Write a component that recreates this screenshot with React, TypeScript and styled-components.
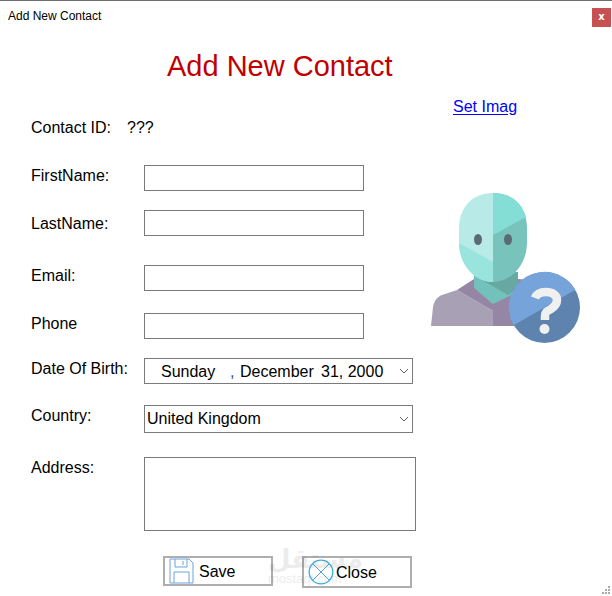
import React from "react";
import styled, { createGlobalStyle } from "styled-components";

const GlobalStyle = createGlobalStyle`
  html, body {
    margin: 0;
    padding: 0;
    background: #fff;
  }
  * {
    box-sizing: border-box;
  }
`;

const Chevron = () => (
  <ChevronIcon width="10" height="6" viewBox="0 0 10 6">
    <path d="M1 1l4 4 4-4" fill="none" stroke="#606060" strokeWidth="1" />
  </ChevronIcon>
);

const ContactPicture = () => (
  <PictureSvg width="170" height="170" viewBox="0 0 170 170">
    <path d="M11 146l2-19c1-6 4-10 9-12l15-5 36 21v15z" fill="#a8a0b4" />
    <path d="M54 99L37 110l36 21v15h37V100l-12-1z" fill="#9686a5" />
    <path d="M54 92v16l19 16 25-12V92z" fill="#72c1ba" />
    <path d="M62 100l26 15 10-7V92z" fill="#68a8a3" />
    <path d="M73 13C50 13 39 30 39 48v14c0 23 16 40 34 40z" fill="#b8ebe7" />
    <path d="M39 63l34 19v20C55 102 39 85 39 63z" fill="#99e5dd" />
    <path d="M73 13c23 0 34 17 34 35v14c0 23-16 40-34 40z" fill="#78c4bd" />
    <path d="M73 13c18 0 29 10 33 24L73 55z" fill="#85ded6" />
    <ellipse cx="58" cy="59.500" rx="4" ry="5.500" fill="#5c6b73" />
    <ellipse cx="88" cy="59.500" rx="4" ry="5.500" fill="#5c6b73" />
    <circle cx="124.500" cy="127.500" r="35.500" fill="#5e83ae" />
    <path d="M93.600 145.300A35.500 35.500 0 0 1 155.400 109.700z" fill="#76a4da" />
    <path
      d="M115 118c2-5 7-6 11-6 6 0 11 3 11 8 0 4-3 7-6 9-4 2-6 3-6 7v4"
      fill="none"
      stroke="#f0f0f0"
      strokeWidth="8.500"
    />
    <circle cx="124.500" cy="149" r="5" fill="#f0f0f0" />
  </PictureSvg>
);

const SaveIcon = () => (
  <svg width="25" height="26" viewBox="0 0 25 26">
    <path
      d="M1 1h19l4 4v20H1zM6 1v8h12V1M14 3v4M5 25V14h15v11"
      fill="none"
      stroke="#6ca3dc"
      strokeWidth="1"
    />
  </svg>
);

const CloseIcon = () => (
  <svg width="26" height="26" viewBox="0 0 26 26">
    <circle cx="13" cy="13" r="11.800" fill="none" stroke="#35aee8" strokeWidth="1.300" />
    <path d="M5 5l16 16M21 5L5 21" stroke="#5a9fd0" strokeWidth="1" />
  </svg>
);

export default function App() {
  return (
    <Window>
      <GlobalStyle />
      <TitleBar>
        <TitleText>Add New Contact</TitleText>
        <CloseBox>x</CloseBox>
      </TitleBar>

      <Heading>Add New Contact</Heading>

      <Body>
        <FormColumn>
          <IdRow>
            <IdLabel>Contact ID:</IdLabel>
            <span>???</span>
          </IdRow>

          <Row $top={28}>
            <Label>FirstName:</Label>
            <TextBox />
          </Row>
          <Row $top={19}>
            <Label $offset={5}>LastName:</Label>
            <TextBox />
          </Row>
          <Row $top={29}>
            <Label>Email:</Label>
            <TextBox />
          </Row>
          <Row $top={22}>
            <Label>Phone</Label>
            <TextBox />
          </Row>
          <Row $top={19}>
            <Label>Date Of Birth:</Label>
            <Picker $width={269} $height={26}>
              <DateParts>
                <DayPart>Sunday</DayPart>
                <CommaPart>,</CommaPart>
                <MonthPart>December</MonthPart>
                <span>31, 2000</span>
              </DateParts>
              <Chevron />
            </Picker>
          </Row>
          <Row $top={21}>
            <Label>Country:</Label>
            <Picker $width={269} $height={28}>
              <CountryText>United Kingdom</CountryText>
              <Chevron />
            </Picker>
          </Row>
          <Row $top={24}>
            <Label>Address:</Label>
            <AddressBox />
          </Row>

          <Buttons>
            <SaveButton>
              <SaveIcon />
              <ButtonLabel>Save</ButtonLabel>
            </SaveButton>
            <CloseButton>
              <CloseIcon />
              <ButtonLabel>Close</ButtonLabel>
            </CloseButton>
          </Buttons>
        </FormColumn>

        <SideColumn>
          <SetImage href="#">Set Imag</SetImage>
          <ContactPicture />
        </SideColumn>
      </Body>

      <Watermark>
        <WatermarkArabic>مستقل</WatermarkArabic>
        <WatermarkLatin>mostaql.com</WatermarkLatin>
      </Watermark>

      <Grip width="10" height="10" viewBox="0 0 10 10">
        <path d="M7 1h2v2H7zM4 4h2v2H4zM7 4h2v2H7zM1 7h2v2H1zM4 7h2v2H4zM7 7h2v2H7z" fill="#a9a9b4" />
      </Grip>
    </Window>
  );
}

const Window = styled.div`
  position: relative;
  width: 612px;
  height: 596px;
  overflow: hidden;
  background: #fff;
  border-top: 1px solid #6e6e6e;
  color: #000;
  font-family: "Liberation Sans", Arial, sans-serif;
  font-size: 16px;
`;

const TitleBar = styled.div`
  display: flex;
  justify-content: space-between;
  height: 27px;
  padding: 7px 1px 0 8px;
`;

const TitleText = styled.div`
  margin-top: 1px;
  font-size: 12px;
  line-height: 14px;
`;

const CloseBox = styled.div`
  width: 19px;
  height: 19px;
  background: #c75050;
  color: #fff;
  font-family: "DejaVu Sans", sans-serif;
  font-size: 10px;
  font-weight: 700;
  line-height: 17px;
  text-align: center;
`;

const Heading = styled.h1`
  margin: 20px 0 0 167px;
  font-size: 29px;
  font-weight: 400;
  line-height: 36px;
  color: #c00000;
`;

const Body = styled.div`
  display: flex;
`;

const FormColumn = styled.div`
  width: 431px;
  padding: 35px 0 0 31px;
`;

const IdRow = styled.div`
  display: flex;
  line-height: 18px;
`;

const IdLabel = styled.span`
  width: 96px;
`;

const Row = styled.div<{ $top: number }>`
  display: flex;
  margin-top: ${(p) => p.$top}px;
`;

const Label = styled.label<{ $offset?: number }>`
  width: 113px;
  line-height: 18px;
  margin-top: ${(p) => p.$offset ?? 2}px;
`;

const TextBox = styled.input`
  width: 220px;
  height: 26px;
  border: 1px solid #7a7a7a;
  background: #fff;
`;

const AddressBox = styled.textarea`
  width: 272px;
  height: 74px;
  border: 1px solid #7a7a7a;
  resize: none;
`;

const Picker = styled.div<{ $width: number; $height: number }>`
  display: flex;
  align-items: center;
  justify-content: space-between;
  width: ${(p) => p.$width}px;
  height: ${(p) => p.$height}px;
  padding-right: 3px;
  border: 1px solid #7a7a7a;
`;

const DateParts = styled.div`
  display: flex;
  padding: 1px 0 0 16px;
`;

const DayPart = styled.span`
  width: 69px;
`;

const CommaPart = styled.span`
  width: 10px;
  color: #2a4a7a;
`;

const MonthPart = styled.span`
  width: 81px;
`;

const CountryText = styled.span`
  padding-left: 2px;
`;

const ChevronIcon = styled.svg`
  flex: none;
`;

const Buttons = styled.div`
  display: flex;
  align-items: flex-start;
  gap: 29px;
  margin: 25px 0 0 132px;
`;

const BaseButton = styled.button`
  display: flex;
  align-items: center;
  width: 110px;
  padding: 0 0 0 4px;
  border: 2px solid #aeaeae;
  background: #fff;
  color: #000;
  font-family: inherit;
  font-size: 16px;
`;

const SaveButton = styled(BaseButton)`
  height: 30px;
  gap: 5px;
`;

const CloseButton = styled(BaseButton)`
  height: 32px;
  gap: 2px;
`;

const ButtonLabel = styled.span`
  margin-top: 2px;
`;

const SideColumn = styled.div`
  display: flex;
  flex-direction: column;
`;

const SetImage = styled.a`
  margin: 14px 0 0 22px;
  line-height: 18px;
  color: #0000ff;
  text-underline-offset: 2px;
`;

const PictureSvg = styled.svg`
  display: block;
  margin: 64px 0 0 -11px;
`;

const Watermark = styled.div`
  position: absolute;
  left: 268px;
  top: 545px;
  width: 70px;
  color: #000;
  opacity: 0.07;
  text-align: center;
  pointer-events: none;
`;

const WatermarkArabic = styled.div`
  font-family: "DejaVu Sans", sans-serif;
  font-size: 26px;
  font-weight: 700;
  line-height: 26px;
  white-space: nowrap;
`;

const WatermarkLatin = styled.div`
  font-size: 13px;
  line-height: 13px;
`;

const Grip = styled.svg`
  position: absolute;
  right: 1px;
  bottom: 1px;
`;
